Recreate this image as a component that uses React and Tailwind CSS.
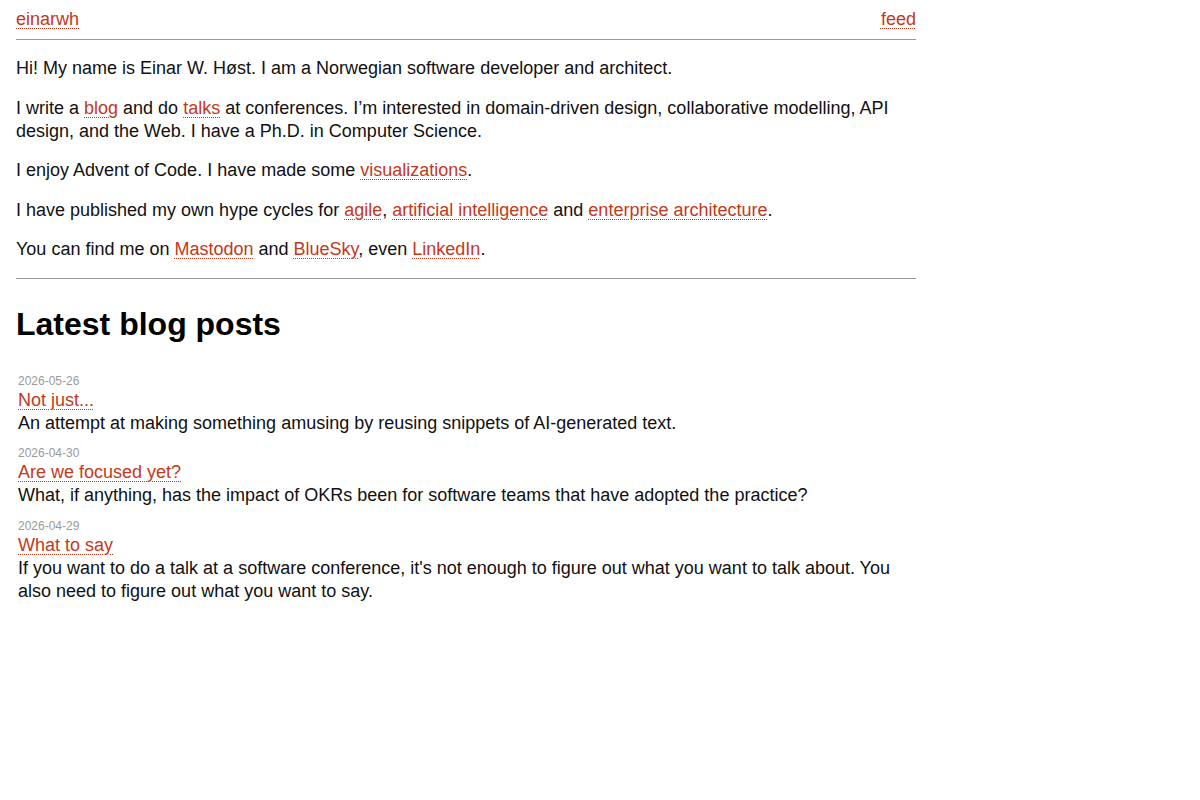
const A = ({ children }) => (
  <a href="#" className="text-[#c3391c] underline decoration-dotted decoration-1 underline-offset-[3px]">
    {children}
  </a>
);

const posts = [
  {
    date: '2026-05-26',
    title: 'Not just...',
    summary: 'An attempt at making something amusing by reusing snippets of AI-generated text.',
  },
  {
    date: '2026-04-30',
    title: 'Are we focused yet?',
    summary: 'What, if anything, has the impact of OKRs been for software teams that have adopted the practice?',
  },
  {
    date: '2026-04-29',
    title: 'What to say',
    summary:
      "If you want to do a talk at a software conference, it's not enough to figure out what you want to talk about. You also need to figure out what you want to say.",
  },
];

export default function App() {
  return (
    <div className="min-h-screen bg-white font-['Liberation_Sans',Arial,sans-serif] text-[18px] leading-[23px] text-[#111]">
      <div className="max-w-[932px] px-4 pt-2">
        <header className="flex justify-between">
          <A>einarwh</A>
          <A>feed</A>
        </header>
        <hr className="mt-2 border-t border-[#999]" />

        <div className="flex flex-col gap-[16.5px] mt-[17px]">
          <p>Hi! My name is Einar W. Høst. I am a Norwegian software developer and architect.</p>
          <p>
            I write a <A>blog</A> and do <A>talks</A> at conferences. I’m interested in domain-driven design,
            collaborative modelling, API design, and the Web. I have a Ph.D. in Computer Science.
          </p>
          <p>
            I enjoy Advent of Code. I have made some <A>visualizations</A>.
          </p>
          <p>
            I have published my own hype cycles for <A>agile</A>, <A>artificial intelligence</A> and{' '}
            <A>enterprise architecture</A>.
          </p>
          <p>
            You can find me on <A>Mastodon</A> and <A>BlueSky</A>, even <A>LinkedIn</A>.
          </p>
        </div>
        <hr className="mt-[17px] border-t border-[#999]" />

        <h2 className="mt-[27px] text-[32px] leading-[37px] font-bold text-black">Latest blog posts</h2>

        <ul className="mt-[30.5px] pl-[2px] flex flex-col gap-[11.5px]">
          {posts.map((p) => (
            <li key={p.date}>
              <div className="text-[12px] leading-[15px] text-[#9a9a9a]">{p.date}</div>
              <A>{p.title}</A>
              <div>{p.summary}</div>
            </li>
          ))}
        </ul>
      </div>
    </div>
  );
}
